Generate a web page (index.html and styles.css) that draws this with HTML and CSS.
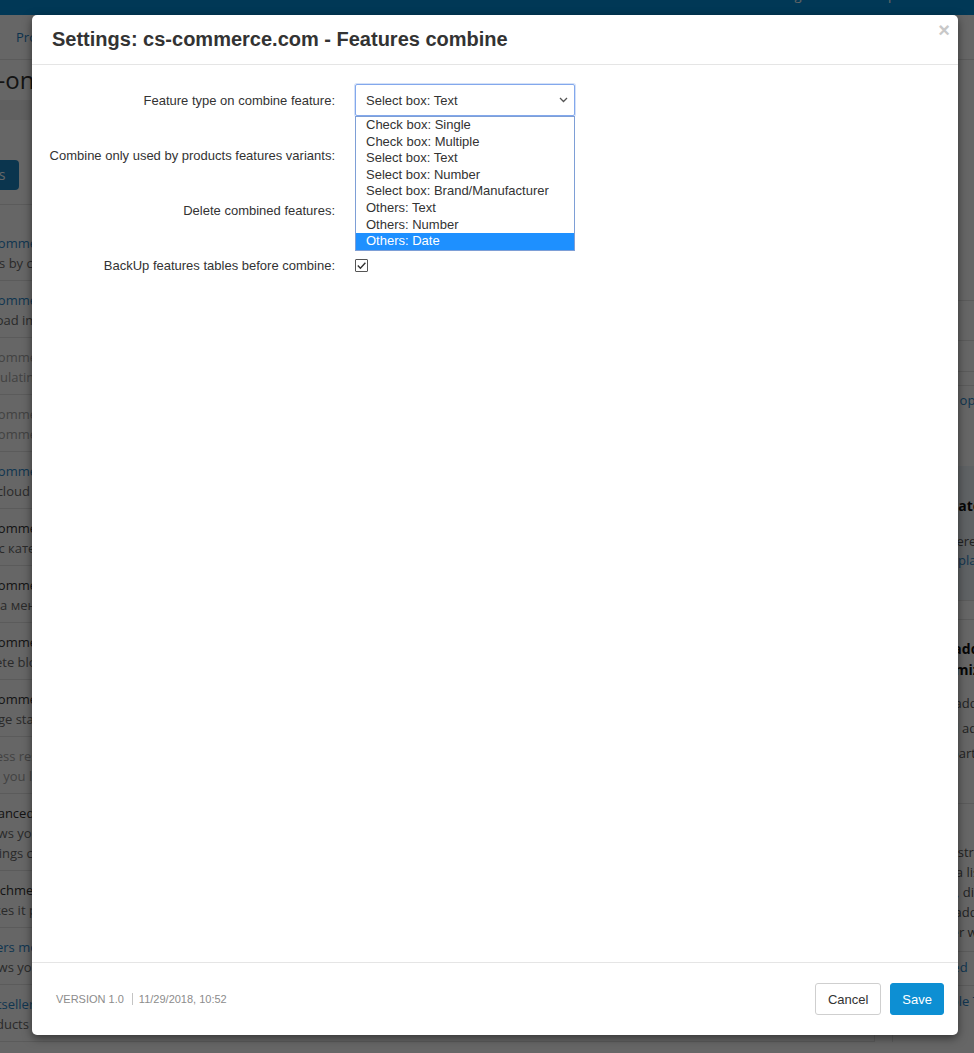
FILE: index.html
```html
<!DOCTYPE html>
<html lang="en">
<head>
    <meta charset="UTF-8">
    <title>Add-ons - Settings: cs-commerce.com - Features combine</title>
    <link rel="stylesheet" href="styles.css">
</head>
<body>
    <!-- Page behind the dialog -->
    <div class="page">
        <div class="topbar">
            <span class="topbar-link">Settings</span>
            <span class="topbar-link">Help</span>
        </div>
        <div class="mainnav">
            <a class="nav-link">Products</a>
        </div>

        <div class="content">
            <div class="main">
                <h1 class="page-title">Add-ons</h1>
                <div class="toolbar"></div>
                <div class="actions">
                    <span class="btn-primary">Browse add-ons</span>
                </div>

                <ul class="addon-list">
                    <li class="addon"><a class="addon-name">cs-commerce.com - Features combine</a><span class="addon-desc">Fixes by category</span></li>
                    <li class="addon"><a class="addon-name">cs-commerce.com - Images</a><span class="addon-desc">Upload images</span></li>
                    <li class="addon is-off"><a class="addon-name">cs-commerce.com - Prices</a><span class="addon-desc">Calculating prices</span></li>
                    <li class="addon is-off"><a class="addon-name">cs-commerce.com - Core</a><span class="addon-desc">cs-commerce.com core</span></li>
                    <li class="addon"><a class="addon-name">cs-commerce.com - Cloud</a><span class="addon-desc">Via cloud storage</span></li>
                    <li class="addon is-dark"><a class="addon-name">cs-commerce.com - Меню</a><span class="addon-desc">Тег с категориями</span></li>
                    <li class="addon is-dark"><a class="addon-name">cs-commerce.com - Цены</a><span class="addon-desc">Цена меню</span></li>
                    <li class="addon is-dark"><a class="addon-name">cs-commerce.com - Blocks</a><span class="addon-desc">Delete blocks</span></li>
                    <li class="addon is-dark"><a class="addon-name">cs-commerce.com - Stats</a><span class="addon-desc">Image stats</span></li>
                    <li class="addon is-off"><a class="addon-name">Access restrictions</a><span class="addon-desc">Lets you limit access</span></li>
                    <li class="addon is-dark"><a class="addon-name">Advanced import</a><span class="addon-desc">Allows you to import</span><span class="addon-desc">Settings can be saved</span></li>
                    <li class="addon is-dark"><a class="addon-name">Attachments</a><span class="addon-desc">Makes it possible</span></li>
                    <li class="addon"><a class="addon-name">Sellers module</a><span class="addon-desc">Allows you to sell</span></li>
                    <li class="addon"><a class="addon-name">Bestsellers</a><span class="addon-desc">Products bestsellers</span></li>
                </ul>
            </div>

            <aside class="sidebar">
                <div class="side-top"></div>
                <ul class="side-links">
                    <li class="side-item tall"></li>
                    <li class="side-item"></li>
                </ul>
                <div class="side-gap"></div>
                <ul class="side-links">
                    <li class="side-item"><a class="side-link">Design open</a></li>
                </ul>
                <div class="side-box">
                    <h4 class="side-heading">Templates</h4>
                    <p class="side-text">Also there are a lot</p>
                    <a class="side-link">Marketplace</a>
                </div>
                <div class="side-section">
                    <h4 class="side-heading">Keep add-on</h4>
                    <h4 class="side-heading">Customization</h4>
                    <p class="side-text loose">Install add-ons</p>
                    <p class="side-text loose">Upload add-on</p>
                    <p class="side-text loose">Third-party</p>
                </div>
                <div class="side-section plain">
                    <p class="side-text">Administration</p>
                    <p class="side-text">This is a list</p>
                    <p class="side-text">Enable, disable</p>
                    <p class="side-text">Install add-ons</p>
                    <p class="side-text">Another way</p>
                </div>
                <ul class="side-links">
                    <li class="side-item wide"><a class="side-link">Disabled</a></li>
                    <li class="side-item wide"><a class="side-link">Available Tools</a></li>
                </ul>
            </aside>
        </div>
    </div>

    <div class="backdrop"></div>

    <!-- Settings dialog -->
    <div class="modal">
        <div class="modal-header">
            <h3 class="modal-title">Settings: cs-commerce.com - Features combine</h3>
            <span class="modal-close">&times;</span>
        </div>

        <div class="modal-body">
            <div class="form-grid">
                <label class="form-label">Feature type on combine feature:</label>
                <div class="form-control">
                    <div class="select">
                        <span>Select box: Text</span>
                        <svg class="select-arrow" width="9" height="6" viewBox="0 0 9 6"><path d="M1 1l3.5 3.5L8 1" fill="none" stroke="#555" stroke-width="1.3"/></svg>
                    </div>
                    <ul class="select-options">
                        <li>Check box: Single</li>
                        <li>Check box: Multiple</li>
                        <li>Select box: Text</li>
                        <li>Select box: Number</li>
                        <li>Select box: Brand/Manufacturer</li>
                        <li>Others: Text</li>
                        <li>Others: Number</li>
                        <li class="active">Others: Date</li>
                    </ul>
                </div>

                <label class="form-label">Combine only used by products features variants:</label>
                <div class="form-control"><span class="checkbox"></span></div>

                <label class="form-label">Delete combined features:</label>
                <div class="form-control"><span class="checkbox"></span></div>

                <label class="form-label">BackUp features tables before combine:</label>
                <div class="form-control">
                    <span class="checkbox">
                        <svg width="11" height="11" viewBox="0 0 11 11"><path d="M1.8 5.6l2.6 2.6 5-5.4" fill="none" stroke="#333" stroke-width="1.4"/></svg>
                    </span>
                </div>
            </div>
        </div>

        <div class="modal-footer">
            <div class="version">
                <span>VERSION 1.0</span>
                <span class="version-sep"></span>
                <span>11/29/2018, 10:52</span>
            </div>
            <div class="buttons">
                <button class="btn">Cancel</button>
                <button class="btn btn-save">Save</button>
            </div>
        </div>
    </div>
</body>
</html>
```

FILE: styles.css
```css
* {
    margin: 0;
    padding: 0;
    box-sizing: border-box;
}

body {
    font-family: "Liberation Sans", Arial, sans-serif;
    font-size: 13px;
    color: #333;
    background-color: #fff;
    height: 1053px;
    overflow: hidden;
    position: relative;
}

ul {
    list-style: none;
}

/* ---------- page behind the dialog ---------- */

.page {
    font-family: "Open Sans", Arial, sans-serif;
    font-size: 13px;
    color: #333;
}

.topbar {
    height: 15px;
    background: #038dd6;
    overflow: hidden;
    display: flex;
    justify-content: flex-end;
    gap: 60px;
    padding-right: 78px;
}

.topbar-link {
    color: #fff;
    line-height: 13px;
    margin-top: -11px;
}

.mainnav {
    height: 45px;
    display: flex;
    align-items: center;
    padding-left: 16px;
    border-bottom: 1px solid #e3e3e3;
}

.nav-link {
    color: #1f7fc4;
}

.content {
    display: flex;
}

.main {
    width: 900px;
    margin-left: -25px;
    flex-shrink: 0;
    border-right: 1px solid #e3e3e3;
}

.page-title {
    font-size: 24px;
    font-weight: normal;
    line-height: 40px;
    margin-left: -22px;
}

.toolbar {
    height: 20px;
    background: #f0f0f0;
}

.actions {
    height: 85px;
    padding-top: 40px;
    border-bottom: 1px solid #e3e3e3;
}

.btn-primary {
    display: inline-block;
    margin-left: -89px;
    height: 30px;
    line-height: 30px;
    padding: 0 14px;
    background: #1c86c4;
    color: #fff;
    border-radius: 4px;
    font-size: 14px;
}

.addon-list {
    padding-top: 19px;
}

.addon {
    display: flex;
    flex-direction: column;
    padding: 9px 0 7px;
    border-bottom: 1px solid #e3e3e3;
    line-height: 20px;
}

.addon-name {
    color: #2b86c8;
}

.addon.is-off .addon-name {
    color: #a5a5a5;
}

.addon.is-dark .addon-name {
    color: #333;
}

.addon-desc {
    color: #6a6a6a;
}

.addon.is-off .addon-desc {
    color: #a5a5a5;
}

.sidebar {
    margin-left: 17px;
    width: 200px;
    flex-shrink: 0;
    padding-left: 22px;
    border-left: 1px solid #e3e3e3;
}

.side-top {
    height: 240px;
}

.side-item {
    height: 31px;
    border-top: 1px solid #e3e3e3;
    padding-top: 5px;
}

.side-item.tall {
    height: 40px;
}

.side-item.wide {
    height: 34px;
    padding-top: 6px;
}

.side-gap {
    height: 14px;
    border-top: 1px solid #e3e3e3;
}

.side-link {
    color: #2b86c8;
}

.side-box {
    margin-top: 50px;
    margin-left: -22px;
    padding: 29px 22px 20px;
    height: 135px;
    background: #eef4f9;
    border-bottom: 1px solid #e3e3e3;
}

.side-heading {
    font-size: 14px;
    color: #111;
    line-height: 21px;
}

.side-text {
    line-height: 20px;
    color: #555;
}

.side-box .side-heading {
    margin-bottom: 15px;
}

.side-section {
    margin-top: 18px;
    padding: 18px 0 37px;
    border-top: 1px solid #e3e3e3;
}

.side-section .side-heading + .side-text {
    margin-top: 11px;
}

.side-text.loose {
    line-height: 25px;
}

.side-section.plain {
    margin-top: 0;
    padding: 38px 0 9px;
}

/* ---------- dialog ---------- */

.backdrop {
    position: absolute;
    inset: 0;
    background: rgba(0, 0, 0, 0.6);
}

.modal {
    position: absolute;
    top: 15px;
    left: 32px;
    width: 926px;
    height: 1020px;
    background: #fff;
    border-radius: 5px;
    box-shadow: 0 3px 10px rgba(0, 0, 0, 0.5);
    display: flex;
    flex-direction: column;
}

.modal-header {
    position: relative;
    height: 50px;
    padding: 0 20px;
    display: flex;
    align-items: center;
    border-bottom: 1px solid #e5e5e5;
}

.modal-title {
    font-size: 20px;
    font-weight: bold;
    color: #333;
}

.modal-close {
    position: absolute;
    top: 5px;
    right: 8px;
    font-size: 20px;
    font-weight: bold;
    line-height: 20px;
    color: #c8c8c8;
}

.modal-body {
    flex: 1;
    padding-top: 19px;
}

.form-grid {
    display: grid;
    grid-template-columns: 303px 220px;
    grid-auto-rows: 32px;
    column-gap: 20px;
    row-gap: 23px;
}

.form-label {
    text-align: right;
    align-self: center;
    color: #333;
}

.form-control {
    position: relative;
    display: flex;
    align-items: center;
}

.select {
    width: 220px;
    height: 32px;
    border: 1px solid #83a8ec;
    border-radius: 2px;
    box-shadow: 0 0 0 1px rgba(131, 168, 236, 0.35);
    padding: 0 6px 0 10px;
    display: flex;
    align-items: center;
    justify-content: space-between;
    color: #333;
}

.select-options {
    position: absolute;
    top: 32px;
    left: 0;
    width: 220px;
    border: 1px solid #7e9fd6;
    background: #fff;
    z-index: 5;
}

.select-options li {
    height: 16.6px;
    line-height: 16.6px;
    padding-left: 10px;
    color: #333;
    white-space: nowrap;
}

.select-options li.active {
    background: #1e90ff;
    color: #fff;
}

.checkbox {
    width: 13px;
    height: 13px;
    border: 1px solid #555;
    border-radius: 1px;
    display: flex;
    align-items: center;
    justify-content: center;
    background: #fff;
}

.modal-footer {
    border-top: 1px solid #e5e5e5;
    padding: 20px 14px 20px 24px;
    display: flex;
    justify-content: space-between;
    align-items: center;
}

.version {
    display: flex;
    align-items: center;
    font-size: 11px;
    color: #8c8c8c;
}

.version-sep {
    width: 1px;
    height: 12px;
    background: #c4c4c4;
    margin: 0 6px 0 8px;
}

.buttons {
    display: flex;
    gap: 9px;
}

.btn {
    height: 32px;
    padding: 0 12px;
    font-family: "Liberation Sans", Arial, sans-serif;
    font-size: 13px;
    color: #333;
    background: #fff;
    border: 1px solid #cfcfcf;
    border-radius: 3px;
}

.btn-save {
    padding: 0 11px;
    background: #0d8fd3;
    border-color: #0d8fd3;
    color: #fff;
}
```
